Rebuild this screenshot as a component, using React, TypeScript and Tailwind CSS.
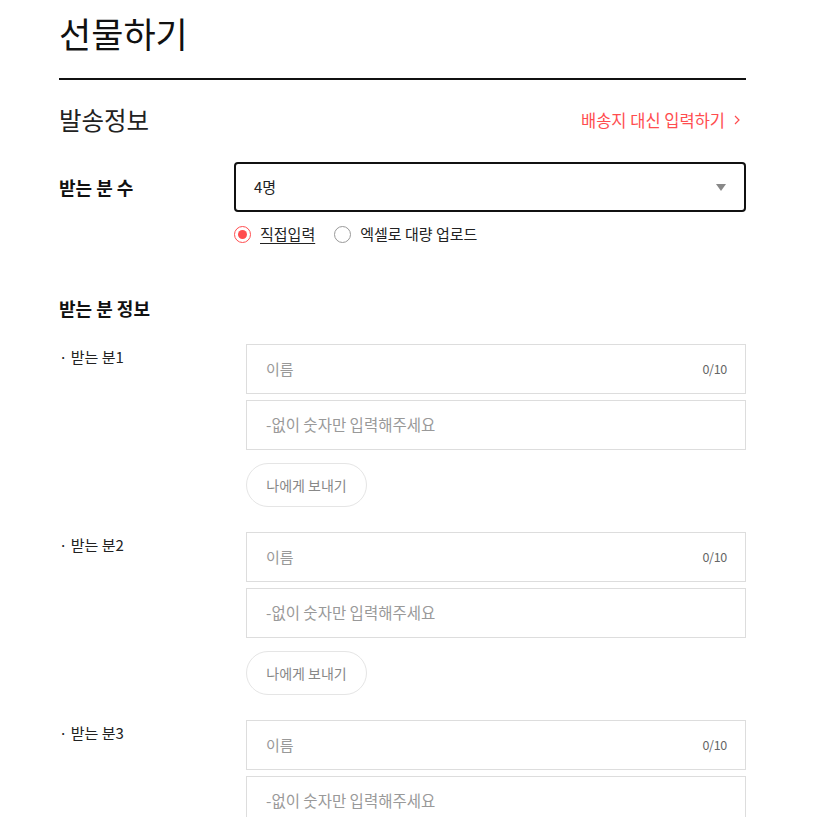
const font = { fontFamily: '"Noto Sans CJK KR", "Noto Sans", sans-serif' };

function Radio({ checked, label }: { checked?: boolean; label: string }) {
  return (
    <label className="flex items-center gap-[9px]">
      {checked ? (
        <span className="flex h-[17px] w-[17px] items-center justify-center rounded-full border-[1.5px] border-[#ff4d4f]">
          <span className="h-[9px] w-[9px] rounded-full bg-[#ff4d4f]" />
        </span>
      ) : (
        <span className="h-[17px] w-[17px] rounded-full border-[1.5px] border-[#999]" />
      )}
      <span className={`text-[15px] text-[#222] ${checked ? "underline underline-offset-[3px]" : ""}`}>
        {label}
      </span>
    </label>
  );
}

function Recipient({ n }: { n: number }) {
  return (
    <div className="flex">
      <div className="w-[187px] text-[15px] leading-[26px] text-[#222]">· 받는 분{n}</div>
      <div className="flex w-[500px] flex-col gap-[6px]">
        <div className="flex h-[50px] items-center justify-between border border-[#ddd] pl-[19px] pr-[18px]">
          <span className="text-[15px] text-[#999]">이름</span>
          <span className="text-[12.5px] tracking-[-0.3px] text-[#666]">0/10</span>
        </div>
        <div className="flex h-[50px] items-center border border-[#ddd] px-[19px]">
          <span className="text-[15.5px] text-[#999]">-없이 숫자만 입력해주세요</span>
        </div>
        <button className="mt-[7px] h-[44px] w-[121px] rounded-full border border-[#e5e5e5] text-[14px] text-[#888]">
          나에게 보내기
        </button>
      </div>
    </div>
  );
}

export default function App() {
  return (
    <div className="min-h-screen bg-white" style={font}>
      <div className="w-[746px] pl-[59px]">
        <h1 className="pt-[8px] text-[35px] leading-[50px] text-[#111]">선물하기</h1>
        <div className="mt-[20px] h-[2px] bg-[#111]" />

        <div className="mt-[24px] flex h-[32px] items-center justify-between">
          <h2 className="text-[24.5px] text-[#222]">발송정보</h2>
          <a className="flex items-center gap-[9px] pr-[6px] text-[16.5px] text-[#ff4d4f]">
            배송지 대신 입력하기
            <svg width="6" height="10" viewBox="0 0 6 10" fill="none">
              <path d="M1 1l4 4-4 4" stroke="#ff4d4f" strokeWidth="1.2" />
            </svg>
          </a>
        </div>

        <div className="mt-[26px] flex items-center">
          <div className="w-[175px] text-[18px] font-bold text-[#111]">받는 분 수</div>
          <div className="flex h-[50px] flex-1 items-center justify-between rounded-[4px] border-2 border-[#111] pl-[18px] pr-[18px]">
            <span className="text-[15px] text-[#222]">4명</span>
            <svg width="10" height="7" viewBox="0 0 10 7">
              <path d="M0 0h10L5 7z" fill="#888" />
            </svg>
          </div>
        </div>

        <div className="ml-[175px] mt-[12px] flex h-[20px] items-center gap-[19px]">
          <Radio checked label="직접입력" />
          <Radio label="엑셀로 대량 업로드" />
        </div>

        <h3 className="mt-[51px] text-[18px] font-bold leading-[26px] text-[#111]">받는 분 정보</h3>

        <div className="mt-[23px] flex flex-col gap-[25px] pb-[40px]">
          <Recipient n={1} />
          <Recipient n={2} />
          <Recipient n={3} />
        </div>
      </div>
    </div>
  );
}
